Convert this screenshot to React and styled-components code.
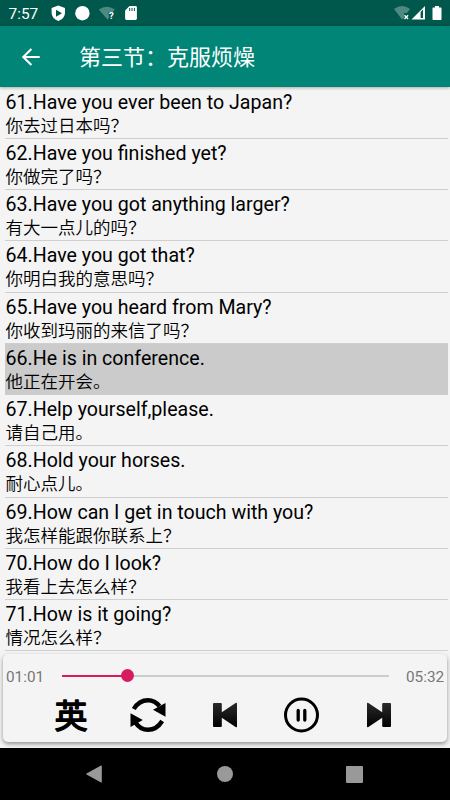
import styled, { createGlobalStyle } from "styled-components";

const GlobalStyle = createGlobalStyle`
  * {
    box-sizing: border-box;
  }

  body {
    margin: 0;
    font-family: Roboto, "Noto Sans CJK SC", sans-serif;
    background: #f4f4f4;
  }
`;

const Screen = styled.div`
  display: flex;
  flex-direction: column;
  width: 450px;
  height: 800px;
  overflow: hidden;
  background: #f4f4f4;
`;

const StatusBar = styled.div`
  display: flex;
  flex-shrink: 0;
  height: 26px;
  background: #00574b;
`;

const Clock = styled.span`
  width: 51px;
  padding-left: 8.5px;
  font-size: 15.4px;
  line-height: 28px;
  color: #fff;
`;

const StatusGroup = styled.div`
  display: flex;
  margin-left: ${({ $end }) => ($end ? "auto" : 0)};
`;

const AppBar = styled.header`
  display: flex;
  flex-shrink: 0;
  align-items: center;
  height: 61px;
  padding-left: 18px;
  background: #008577;
  box-shadow: 0 1px 3px rgba(0, 0, 0, 0.3);
  z-index: 1;
`;

const BackButton = styled.button`
  display: flex;
  width: 26px;
  height: 26px;
  padding: 0;
  border: 0;
  background: none;
`;

const Title = styled.h1`
  margin: 0 0 0 35px;
  padding-top: 2px;
  font-size: 22px;
  font-weight: 400;
  line-height: 32px;
  color: #fff;
`;

const SentenceList = styled.ul`
  flex-shrink: 0;
  height: 564px;
  margin: 0;
  padding: 0.5px 2px 0 5px;
  list-style: none;
`;

const Sentence = styled.li`
  height: 51.25px;
  border-bottom: 1px solid ${({ $active }) => ($active ? "#cbcbcb" : "#cfcfcf")};
  background: ${({ $active }) => ($active ? "#cbcbcb" : "transparent")};
  color: #000;
`;

const English = styled.div`
  height: 26px;
  padding: 2px 0 0 0.5px;
  font-size: 19.6px;
  line-height: 26px;
  white-space: nowrap;
`;

const Chinese = styled.div`
  padding-left: 0.5px;
  font-size: 17.5px;
  font-weight: 350;
  line-height: 25px;
  white-space: nowrap;
`;

const PlayerArea = styled.div`
  flex: 1;
  padding: 3px 3px 6px;
`;

const PlayerCard = styled.section`
  height: 88px;
  border-radius: 5px;
  background: #f4f4f4;
  box-shadow: 0 2px 4px rgba(0, 0, 0, 0.4);
`;

const Progress = styled.div`
  display: flex;
  align-items: center;
  height: 43px;
  padding: 0 2px 0 3px;
`;

const Time = styled.span`
  width: 39px;
  padding-top: 3px;
  font-size: 15.3px;
  color: #777;
`;

const Track = styled.div`
  display: flex;
  align-items: center;
  width: 327px;
  height: 2px;
  margin-left: 17px;
  margin-right: auto;
  background: #cdcdcd;
`;

const Elapsed = styled.div`
  height: 2px;
  background: #d81b60;
`;

const Thumb = styled.div`
  flex-shrink: 0;
  width: 13px;
  height: 13px;
  margin-left: -6.5px;
  border-radius: 50%;
  background: #d81b60;
`;

const Controls = styled.div`
  display: flex;
  justify-content: space-between;
  height: 36px;
  padding: 0 50px;
`;

const ControlButton = styled.button`
  display: flex;
  align-items: center;
  justify-content: center;
  width: 36px;
  height: 36px;
  padding: 0;
  border: 0;
  background: none;
  color: #000;

  svg {
    flex-shrink: 0;
  }
`;

const LanguageMark = styled.text`
  font-family: "Noto Sans CJK SC", sans-serif;
  font-size: 33px;
  font-weight: 400;
  fill: currentColor;
  stroke: currentColor;
  stroke-width: 1.5px;
  stroke-linejoin: round;
`;

const NavBar = styled.nav`
  display: flex;
  flex-shrink: 0;
  align-items: center;
  justify-content: space-between;
  height: 52px;
  padding: 0 87px 0 85px;
  background: #000;
`;

const sentences = [
  ["61.Have you ever been to Japan?", "你去过日本吗？"],
  ["62.Have you finished yet?", "你做完了吗？"],
  ["63.Have you got anything larger?", "有大一点儿的吗？"],
  ["64.Have you got that?", "你明白我的意思吗？"],
  ["65.Have you heard from Mary?", "你收到玛丽的来信了吗？"],
  ["66.He is in conference.", "他正在开会。"],
  ["67.Help yourself,please.", "请自己用。"],
  ["68.Hold your horses.", "耐心点儿。"],
  ["69.How can I get in touch with you?", "我怎样能跟你联系上？"],
  ["70.How do I look?", "我看上去怎么样？"],
  ["71.How is it going?", "情况怎么样？"],
];

const StatusIcons = () => (
  <svg width="90" height="26" viewBox="51 0 90 26">
    <path d="M58.3 5.4 65 8v5q0 5.2-6.7 8-6.7-2.8-6.7-8V8z" fill="#fff" />
    <path d="m56 9.7 6 3.5-6 3.5z" fill="#00574b" />
    <circle cx="82.4" cy="13.2" r="7.2" fill="#fff" />
    <path d="M98.7 9.4q8.2-5.5 16.2 0l-2.6 3h-4l1 5-1.8 2.2z" fill="#4d8981" />
    <text x="109" y="19" fontSize="9.5" fontWeight="700" fill="#fff">?</text>
    <path d="M129.5 6h6q1.4 0 1.4 1.4v11.2q0 1.4-1.4 1.4h-9q-1.4 0-1.4-1.4v-8.2z" fill="#fff" />
    <path d="M129.7 8v3M132 8v3M134.4 8v3" stroke="#00574b" />
  </svg>
);

const SignalIcons = () => (
  <svg width="57" height="26" viewBox="393 0 57 26">
    <path d="M394 9q8-6 16 0l-3 4h-3v5l-2 1.5z" fill="#4d8981" />
    <path d="m404.5 15.3 3.6 3.6m0-3.6-3.6 3.6" stroke="#fff" strokeWidth="1.4" />
    <path d="M411.5 19.5 425 6v13.5z" fill="#fff" />
    <path d="M420.6 12v6h2.4v-8.4z" fill="#00574b" />
    <path d="M435 6h4v1.4h1.8q.7 0 .7.7v11.2q0 .7-.7.7h-7.6q-.7 0-.7-.7V8.1q0-.7.7-.7h1.8z" fill="#fff" />
  </svg>
);

const BackIcon = () => (
  <svg width="26" height="26" viewBox="0 0 26 26" fill="none" stroke="#fff" strokeWidth="2.1">
    <path d="M21.7 13H5.5M13.4 4.9 5.3 13l8.1 8.1" />
  </svg>
);

const LanguageIcon = () => (
  <svg width="40" height="56" viewBox="0 0 40 56">
    <LanguageMark x="20" y="40.5" textAnchor="middle">
      英
    </LanguageMark>
  </svg>
);

const RepeatIcon = () => (
  <svg width="36" height="36" viewBox="0 0 36 36">
    <g fill="none" stroke="currentColor" strokeWidth="4.4">
      <path d="M3.8 12Q9 3.2 18 3.2q6.8 0 11.6 6" />
      <path d="M32.2 24q-5.5 8.8-14.2 8.8-7.8 0-12.4-7" />
    </g>
    <path d="M35.5 6v13.7L23 12.8z" fill="currentColor" />
    <path d="M.5 16.3v13.7l12.3-7z" fill="currentColor" />
  </svg>
);

const SkipIcon = ({ flipped }) => (
  <svg width="36" height="36" viewBox="0 0 36 36">
    <defs>
      <linearGradient id={flipped ? "skipNext" : "skipPrevious"} x2="0" y2="1">
        <stop stopColor="#2a2a2a" />
        <stop offset="1" stopColor="#000" />
      </linearGradient>
    </defs>
    <path
      d="M7 6h6.8q1 0 1 1v8.3L28.6 6.1q1.4-.8 1.4.6v22.6q0 1.4-1.4.6L14.8 20.7V29q0 1-1 1H7q-1 0-1-1V7q0-1 1-1z"
      fill={flipped ? "url(#skipNext)" : "url(#skipPrevious)"}
      transform={flipped ? "translate(36 0) scale(-1 1)" : undefined}
    />
  </svg>
);

const PauseIcon = () => (
  <svg width="36" height="36" viewBox="0 0 36 36" fill="none" stroke="currentColor">
    <circle cx="17.5" cy="18" r="16" strokeWidth="3" />
    <path d="M14.2 13.4v9.6M20.8 13.4v9.6" strokeWidth="3.3" strokeLinecap="round" />
  </svg>
);

const App = () => {
  const elapsed = 65.5;

  return (
    <>
      <GlobalStyle />
      <Screen>
        <StatusBar>
          <Clock>7:57</Clock>
          <StatusGroup>
            <StatusIcons />
          </StatusGroup>
          <StatusGroup $end>
            <SignalIcons />
          </StatusGroup>
        </StatusBar>
        <AppBar>
          <BackButton aria-label="返回">
            <BackIcon />
          </BackButton>
          <Title>第三节：克服烦燥</Title>
        </AppBar>
        <SentenceList>
          {sentences.map(([english, chinese], index) => (
            <Sentence key={english} $active={index === 5}>
              <English>{english}</English>
              <Chinese>{chinese}</Chinese>
            </Sentence>
          ))}
        </SentenceList>
        <PlayerArea>
          <PlayerCard>
            <Progress>
              <Time>01:01</Time>
              <Track>
                <Elapsed style={{ width: elapsed }} />
                <Thumb />
              </Track>
              <Time>05:32</Time>
            </Progress>
            <Controls>
              <ControlButton>
                <LanguageIcon />
              </ControlButton>
              <ControlButton>
                <RepeatIcon />
              </ControlButton>
              <ControlButton>
                <SkipIcon />
              </ControlButton>
              <ControlButton>
                <PauseIcon />
              </ControlButton>
              <ControlButton>
                <SkipIcon flipped />
              </ControlButton>
            </Controls>
          </PlayerCard>
        </PlayerArea>
        <NavBar>
          <svg width="18" height="18" viewBox="0 0 18 18">
            <path d="M16 .5q.8-.4.8.5v16q0 .9-.8.5L1.5 9.5q-.7-.5 0-1z" fill="#999" />
          </svg>
          <svg width="16" height="16" viewBox="0 0 16 16">
            <circle cx="8" cy="8" r="8" fill="#999" />
          </svg>
          <svg width="17" height="17" viewBox="0 0 17 17">
            <rect width="17" height="17" rx="1" fill="#999" />
          </svg>
        </NavBar>
      </Screen>
    </>
  );
};

export default App;
